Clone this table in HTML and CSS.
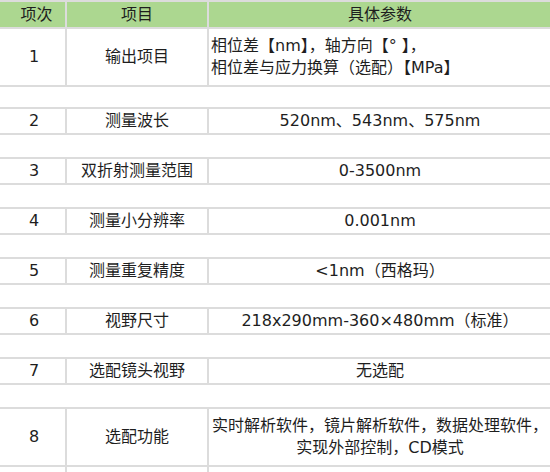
FILE: index.html
```html
<!DOCTYPE html>
<html lang="zh-CN">
<head>
<meta charset="utf-8">
<title>参数表</title>
<link rel="stylesheet" href="styles.css">
</head>
<body>
<table class="spec">
  <colgroup><col class="c1"><col class="c2"><col class="c3"></colgroup>
  <thead>
    <tr class="head"><th class="num">项次</th><th>项目</th><th>具体参数</th></tr>
  </thead>
  <tbody>
    <tr class="tall"><td class="num">1</td><td>输出项目</td><td class="left">相位差【nm】，轴方向【°&nbsp;】，<br>相位差与应力换算（选配）【MPa】</td></tr>
    <tr class="gap first"><td colspan="3"></td></tr>
    <tr class="row"><td class="num">2</td><td>测量波长</td><td>520nm、543nm、575nm</td></tr>
    <tr class="gap"><td colspan="3"></td></tr>
    <tr class="row"><td class="num">3</td><td>双折射测量范围</td><td>0-3500nm</td></tr>
    <tr class="gap"><td colspan="3"></td></tr>
    <tr class="row"><td class="num">4</td><td>测量小分辨率</td><td>0.001nm</td></tr>
    <tr class="gap"><td colspan="3"></td></tr>
    <tr class="row"><td class="num">5</td><td>测量重复精度</td><td>&lt;1nm（西格玛）</td></tr>
    <tr class="gap"><td colspan="3"></td></tr>
    <tr class="row"><td class="num">6</td><td>视野尺寸</td><td>218x290mm-360×480mm（标准）</td></tr>
    <tr class="gap"><td colspan="3"></td></tr>
    <tr class="row"><td class="num">7</td><td>选配镜头视野</td><td>无选配</td></tr>
    <tr class="gap"><td colspan="3"></td></tr>
    <tr class="tall"><td class="num">8</td><td>选配功能</td><td>实时解析软件，镜片解析软件，数据处理软件，<br>实现外部控制，CD模式</td></tr>
    <tr class="tail"><td></td><td></td><td></td></tr>
  </tbody>
</table>
</body>
</html>
```
FILE: styles.css
```css
html, body {
  margin: 0;
  padding: 0;
  background: #ffffff;
  overflow: hidden;
}

.spec {
  border-collapse: separate;
  border-spacing: 2px;
  background: #dcdcdc;
  margin-left: -2px;
  width: 555px;
  table-layout: fixed;
  font-family: "DejaVu Sans", "Noto Sans CJK SC", sans-serif;
  font-size: 16px;
  line-height: 22px;
  color: #1e1e1e;
}

.c1 { width: 65px; }
.c2 { width: 140px; }
.c3 { width: 342px; }

.spec th,
.spec td {
  padding: 0 2px;
  text-align: center;
  vertical-align: middle;
  background: #ffffff;
  white-space: nowrap;
}

.spec th {
  background: #acd790;
  font-weight: normal;
}

.spec td.num {
  padding-left: 5px;
}

.spec th.num {
  padding-left: 10px;
}

.spec td.left {
  text-align: left;
}

.head { height: 25px; }
.tall { height: 56px; }
.row { height: 24px; }
.gap { height: 22px; }
.gap.first { height: 20px; }
.tail { height: 20px; }
```
